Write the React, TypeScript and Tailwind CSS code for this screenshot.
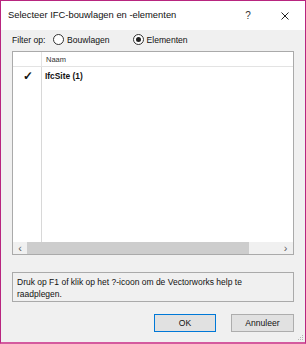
import React from 'react';

const font = { fontFamily: '"Liberation Sans", Arial, sans-serif' };

// Radio button
const Radio = ({ label, checked }: any) => (
  <div className="flex items-center gap-[3px] shrink-0 whitespace-nowrap">
    <span className="w-[11px] h-[11px] rounded-full border border-[#333] bg-white flex items-center justify-center">
      {checked && <span className="w-[5px] h-[5px] rounded-full bg-[#222]" />}
    </span>
    <span>{label}</span>
  </div>
);

export default function App() {
  return (
    <div
      className="w-[306px] h-[344px] flex flex-col border border-[#b8257f] border-b-2 border-b-[#d45a9e] bg-[#f0f0f0] text-[#111] text-[8.6px] overflow-hidden"
      style={font}
    >
      {/* Title bar */}
      <div className="h-[29px] bg-white flex items-center justify-between pl-[7px] pr-[16px] shrink-0">
        <span className="text-[9.4px] text-[#111] whitespace-nowrap">Selecteer IFC-bouwlagen en -elementen</span>
        <div className="w-[46px] flex items-center justify-between shrink-0">
          <span className="w-[10px] text-center text-[10px] text-[#333]">?</span>
          <svg className="shrink-0" width="8" height="8" viewBox="0 0 8 8">
            <path d="M0.5 0.5 L7.5 7.5 M7.5 0.5 L0.5 7.5" stroke="#222" strokeWidth="1" />
          </svg>
        </div>
      </div>

      <div className="flex-1 flex flex-col px-[11px] relative">
        {/* Filter */}
        <div className="h-[20px] flex items-center whitespace-nowrap">
          <span className="w-[41px] shrink-0">Filter op:</span>
          <Radio label="Bouwlagen" />
          <div className="w-[23px] shrink-0" />
          <Radio label="Elementen" checked />
        </div>

        {/* List */}
        <div className="mt-[1px] h-[204px] border border-[#aaa] bg-white flex flex-col shrink-0">
          <div className="h-[15px] flex border-b border-[#e3e3e3] text-[7.5px] text-[#333]">
            <div className="w-[29px] border-r border-[#e3e3e3]" />
            <div className="pl-[4px] leading-[15px]">Naam</div>
          </div>
          <div className="flex-1 flex">
            <div className="w-[29px] border-r border-[#d8d8d8] flex justify-center pt-[1px] pl-[2px]">
              <span className="text-[12px] leading-[16px] font-bold">✓</span>
            </div>
            <div className="pl-[3px] pt-[2px] font-bold leading-[14px] text-[8.4px]">IfcSite (1)</div>
          </div>
          <div className="h-[12px] bg-[#f0f0f0] flex items-center">
            <span className="w-[14px] text-center text-[11px] text-[#606060] leading-[12px]">‹</span>
            <div className="w-[222px] h-full bg-[#cdcdcd]" />
            <div className="flex-1" />
            <span className="w-[15px] text-center text-[11px] text-[#606060] leading-[12px]">›</span>
          </div>
        </div>

        {/* Help text */}
        <div className="mt-[17px] h-[30px] border border-[#aaa] px-[4px] pt-[3px] text-[8.5px] leading-[12px] shrink-0">
          Druk op F1 of klik op het ?-icoon om de Vectorworks help te raadplegen.
        </div>

        {/* Buttons */}
        <div className="mt-[12px] flex justify-end gap-[15px]">
          <button className="w-[62px] h-[18px] border border-[#0078d7] bg-[#e1e1e1] text-[8.6px]">OK</button>
          <button className="w-[63px] h-[18px] border border-[#adadad] bg-[#e1e1e1] text-[8.6px]">Annuleer</button>
        </div>

        {/* Resize grip */}
        <svg className="absolute right-[1px] bottom-[1px]" width="6" height="6" viewBox="0 0 6 6">
          <rect x="4" y="0" width="1" height="1" fill="#b5b5b5" />
          <rect x="2" y="2" width="1" height="1" fill="#b5b5b5" />
          <rect x="4" y="2" width="1" height="1" fill="#b5b5b5" />
          <rect x="0" y="4" width="1" height="1" fill="#b5b5b5" />
          <rect x="2" y="4" width="1" height="1" fill="#b5b5b5" />
          <rect x="4" y="4" width="1" height="1" fill="#b5b5b5" />
        </svg>
      </div>
    </div>
  );
}
